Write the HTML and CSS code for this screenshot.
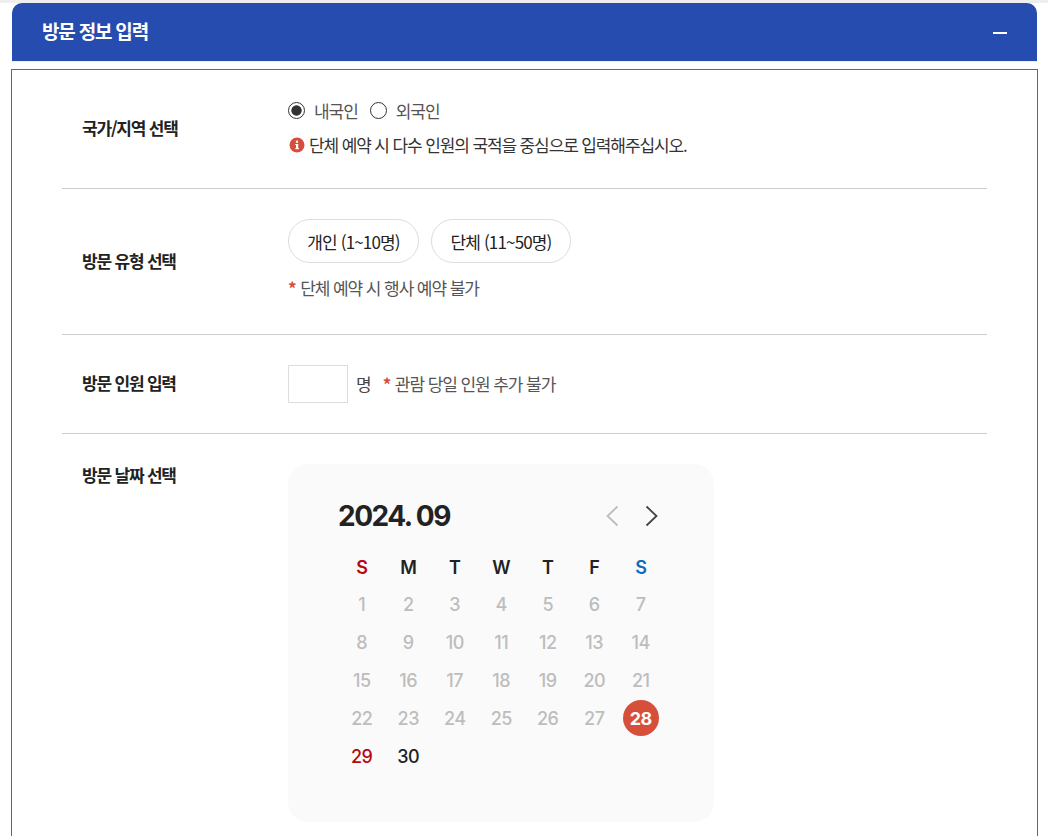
FILE: index.html
```html
<!DOCTYPE html>
<html lang="ko">
<head>
<meta charset="utf-8">
<title>방문 정보 입력</title>
<link rel="stylesheet" href="styles.css">
</head>
<body>
<div class="page">
  <header class="panel-head">
    <h2 class="panel-title">방문 정보 입력</h2>
    <span class="collapse"></span>
  </header>
  <section class="panel-body">
    <div class="row row-center row-nation">
      <div class="label">국가/지역 선택</div>
      <div class="field">
        <div class="radios">
          <span class="radio radio-on"></span><span class="radio-text">내국인</span>
          <span class="radio"></span><span class="radio-text">외국인</span>
        </div>
        <p class="info">
          <svg class="info-icon" viewBox="0 0 16 16" width="16" height="16"><circle cx="8" cy="8" r="7.5" fill="#d64f3a"/><rect x="7" y="7" width="2.2" height="5" fill="#fff"/><rect x="6.2" y="7" width="2" height="1" fill="#fff"/><rect x="6.2" y="11.2" width="3.8" height="1" fill="#fff"/><circle cx="8" cy="4.8" r="1.2" fill="#fff"/></svg>
          단체 예약 시 다수 인원의 국적을 중심으로 입력해주십시오.
        </p>
      </div>
    </div>
    <div class="row row-center row-type">
      <div class="label">방문 유형 선택</div>
      <div class="field">
        <div class="pills">
          <button class="pill pill-a">개인 (1~10명)</button>
          <button class="pill pill-b">단체 (11~50명)</button>
        </div>
        <p class="note"><span class="star">*</span> 단체 예약 시 행사 예약 불가</p>
      </div>
    </div>
    <div class="row row-center row-count">
      <div class="label">방문 인원 입력</div>
      <div class="field field-inline">
        <input class="count" type="text">
        <span class="unit">명</span>
        <span class="note"><span class="star">*</span> 관람 당일 인원 추가 불가</span>
      </div>
    </div>
    <div class="row row-last">
      <div class="label label-top">방문 날짜 선택</div>
      <div class="calendar">
        <div class="cal-head">
          <div class="cal-title">2024. 09</div>
          <div class="cal-nav">
            <svg width="14" height="22" viewBox="0 0 14 22"><path d="M12.5 1.5 2.5 11l10 9.500" fill="none" stroke="#bdbdbd" stroke-width="1.800"/></svg>
            <svg width="14" height="22" viewBox="0 0 14 22"><path d="M1.500 1.500 11.500 11l-10 9.500" fill="none" stroke="#444" stroke-width="1.800"/></svg>
          </div>
        </div>
        <div class="cal-grid">
          <span class="dow sun">S</span><span class="dow">M</span><span class="dow">T</span><span class="dow">W</span><span class="dow">T</span><span class="dow">F</span><span class="dow sat">S</span>
          <span class="day">1</span><span class="day">2</span><span class="day">3</span><span class="day">4</span><span class="day">5</span><span class="day">6</span><span class="day">7</span>
          <span class="day">8</span><span class="day">9</span><span class="day">10</span><span class="day">11</span><span class="day">12</span><span class="day">13</span><span class="day">14</span>
          <span class="day">15</span><span class="day">16</span><span class="day">17</span><span class="day">18</span><span class="day">19</span><span class="day">20</span><span class="day">21</span>
          <span class="day">22</span><span class="day">23</span><span class="day">24</span><span class="day">25</span><span class="day">26</span><span class="day">27</span><span class="day day-sel"><b>28</b></span>
          <span class="day day-sun">29</span><span class="day day-on">30</span>
        </div>
      </div>
    </div>
  </section>
</div>
</body>
</html>
```
FILE: styles.css
```css
* { box-sizing: border-box; }
html, body { margin: 0; padding: 0; height: 836px; overflow: hidden; background: #fff; }
body { font-family: "Noto Sans CJK KR", "Noto Sans", sans-serif; color: #222; }
.page { border-top: 3px solid #eeeeee; padding: 0 11px 0 12px; }
.panel-head {
  height: 58px; background: #264cb0; border-radius: 10px 10px 0 0;
  display: flex; align-items: center; justify-content: space-between;
  padding: 0 30px; box-shadow: 0 1px 0 #eef0f5;
}
.panel-title { margin: -3px 0 0; font-size: 19px; font-weight: 700; color: #fff; letter-spacing: -1.2px; }
.collapse { width: 14px; height: 2px; background: #fff; margin-top: 2px; }
.panel-body {
  margin: 8px -1px 0 -1px; border: 1px solid #666; border-bottom: 0;
  padding: 0 50px; height: 800px;
}
.row { display: flex; border-bottom: 1px solid #ccc; padding: 30px 0; }
.row-nation { padding: 22px 0 31px; }
.row-nation .label { padding-top: 5px; }
.row-center { align-items: center; }
.row-type { padding-bottom: 34px; }
.row-type .label { padding-top: 2px; }
.row-count .field-inline > span { margin-top: -2px; }
.row-count .label { margin-top: -4px; }
.row-last { border-bottom: 0; }
.label { width: 226px; padding-left: 20px; font-size: 17px; font-weight: 700; letter-spacing: -1.2px; color: #222; flex: none; }
.label-top { line-height: 22px; }
.field { flex: 1; }
.field-inline { display: flex; align-items: center; }
.radios { display: flex; align-items: center; height: 36px; font-size: 17px; color: #555; letter-spacing: -1.05px; }
.radio { width: 17px; height: 17px; border: 1.500px solid #333; border-radius: 50%; background: #fff; flex: none; }
.radio-on { background: radial-gradient(circle, #333 0 4.800px, #fff 5.500px); }
.radio-text { margin: 0 12px 0 9px; }
.info { margin: 0; padding-top: 5px; font-size: 17px; letter-spacing: -1.12px; color: #333; display: flex; align-items: center; gap: 4px; line-height: 24px; }
.info-icon { flex: none; margin-left: 1px; }
.pills { display: flex; gap: 12px; }
.pill {
  height: 44px; border: 1px solid #ddd; border-radius: 22px; background: #fff;
  font: 400 17px "Noto Sans CJK KR", sans-serif; color: #222; letter-spacing: -0.85px; padding: 0;
}
.pill-a { width: 131px; }
.pill-b { width: 140px; }
.note { margin: 0; font-size: 17px; color: #555; letter-spacing: -1.08px; }
p.note { margin-top: 13px; line-height: 24px; }
.star { color: #d64f3a; font-weight: 700; margin-right: 1px; }
.count { width: 60px; height: 38px; border: 1px solid #ddd; background: #fff; padding: 0; }
.unit { margin: 0 12px 0 8px; font-size: 17px; color: #444; letter-spacing: -1px; }
.calendar { width: 426px; height: 358px; background: #fafafa; border-radius: 20px; padding: 30px 50px; font-family: Inter, sans-serif; flex: none; }
.cal-head { display: flex; justify-content: space-between; align-items: center; height: 44px; }
.cal-title { font-size: 28px; font-weight: 700; color: #222; letter-spacing: -1.5px; word-spacing: 0; }
.cal-nav { display: flex; gap: 26px; padding-right: 5px; }
.cal-grid { display: grid; grid-template-columns: repeat(7, 1fr); grid-auto-rows: 38px; margin-top: 9px; padding-left: 0.5px; }
.dow, .day { display: flex; align-items: center; justify-content: center; font-size: 18px; letter-spacing: -0.5px; }
.dow { font-weight: 600; color: #222; padding-top: 2px; }
.sun { color: #b5090f; }
.sat { color: #0f6cbd; }
.day { color: #bdbdbd; font-weight: 500; }
.day-on { color: #222; }
.day-sun { color: #b5090f; }
.day-sel b { width: 36px; height: 36px; border-radius: 50%; background: #d64f3a; color: #fff; font-weight: 700; display: flex; align-items: center; justify-content: center; }
```
